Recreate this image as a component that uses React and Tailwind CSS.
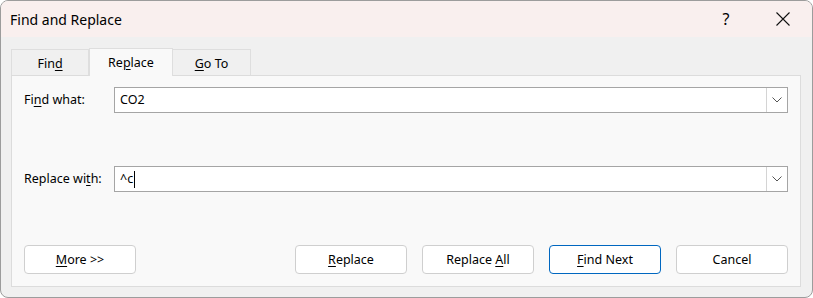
import React from "react";

const U = ({ children }) => <span className="underline underline-offset-[2px] decoration-[1px]">{children}</span>;

function Combo({ value, caret }) {
  return (
    <div className="flex-1 h-[26px] flex bg-white border border-[#a5a5a5]">
      <div className="flex-1 flex items-center pl-[5px] text-[12.5px] text-black">
        <span>{value}</span>
        {caret && <span className="inline-block w-[1px] h-[17px] bg-black ml-[1px]" />}
      </div>
      <div className="w-[21px] h-full border-l border-[#d4d4d4] flex items-center justify-center">
        <svg width="10" height="6" viewBox="0 0 10 6">
          <path d="M0.5 0.5 L5 5 L9.5 0.5" fill="none" stroke="#555" strokeWidth="1" />
        </svg>
      </div>
    </div>
  );
}

function Btn({ children, primary }) {
  return (
    <div
      className={
        "w-[112px] h-[29px] rounded-[4px] bg-white flex items-center justify-center pt-[2px] text-[12.5px] text-black " +
        (primary ? "border border-[#0067c0]" : "border border-[#cfcfcf]")
      }
    >
      <span>{children}</span>
    </div>
  );
}

export default function App() {
  return (
    <div
      className="w-[813px] h-[298px] bg-[#f0f0f0] border border-[#9c9c9c] rounded-[8px] overflow-hidden flex flex-col"
      style={{ fontFamily: '"Noto Sans", "Open Sans", sans-serif' }}
    >
      <div className="h-[36px] bg-[#f9efee] flex items-center pl-[9px] shrink-0">
        <div className="flex-1 text-[14px] text-black">Find and Replace</div>
        <div className="w-[56px] text-center text-[16px] text-black">?</div>
        <div className="w-[58px] h-full flex items-center justify-center">
          <svg width="14" height="14" viewBox="0 0 14 14">
            <path d="M0.5 0.5 L13.5 13.5 M13.5 0.5 L0.5 13.5" stroke="#111" strokeWidth="1.1" fill="none" />
          </svg>
        </div>
      </div>
      <div className="flex-1 flex flex-col pl-[10px] pr-[11px] pt-[10px] pb-[10px]">
        <div className="flex items-end h-[28px] text-[12.5px] text-black relative z-10">
          <div className="w-[78px] h-[26px] border border-b-0 border-[#dedede] bg-[#f0f0f0] flex items-center justify-center pt-[3px]">
            <span>Fin<U>d</U></span>
          </div>
          <div className="w-[84px] h-[28px] border border-b-0 border-[#dedede] bg-[#f9f9f9] flex items-center justify-center -mb-[1px] pt-[1px]">
            <span>Re<U>p</U>lace</span>
          </div>
          <div className="w-[78px] h-[26px] border border-b-0 border-l-0 border-[#dedede] bg-[#f0f0f0] flex items-center justify-center pt-[3px]">
            <span><U>G</U>o To</span>
          </div>
        </div>
        <div className="flex-1 bg-[#f9f9f9] border border-[#dcdcdc] flex flex-col pl-[12px] pr-[12px] pt-[11px] pb-[12px] text-[12.5px] text-black">
          <div className="flex items-center">
            <div className="w-[90px]">Fi<U>n</U>d what:</div>
            <Combo value="CO2" />
          </div>
          <div className="flex items-center mt-[53px]">
            <div className="w-[90px]">Replace wi<U>t</U>h:</div>
            <Combo value="^c" caret />
          </div>
          <div className="flex-1" />
          <div className="flex items-center">
            <Btn>
              <U>M</U>ore &gt;&gt;
            </Btn>
            <div className="flex-1" />
            <div className="flex gap-[15px]">
              <Btn>
                <U>R</U>eplace
              </Btn>
              <Btn>
                Replace <U>A</U>ll
              </Btn>
              <Btn primary>
                <U>F</U>ind Next
              </Btn>
              <Btn>Cancel</Btn>
            </div>
          </div>
        </div>
      </div>
    </div>
  );
}
